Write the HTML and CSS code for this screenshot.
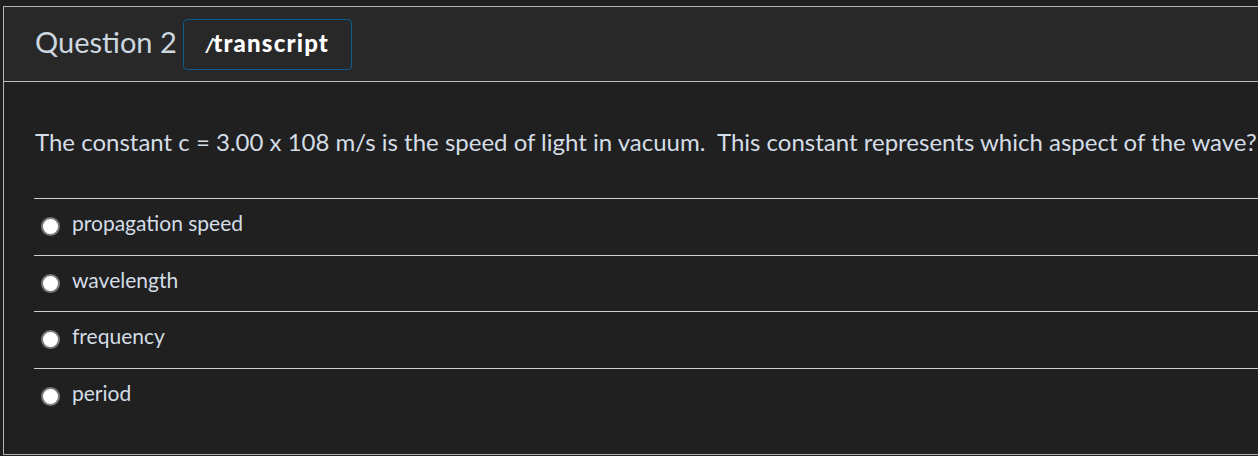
FILE: index.html
```html
<!DOCTYPE html>
<html>
<head>
<meta charset="utf-8">
<link rel="stylesheet" href="styles.css">
</head>
<body>
<div class="panel">
  <div class="header">
    <h2 class="title">Question 2</h2>
    <button class="transcript"><span class="slash">/</span>transcript</button>
  </div>
  <div class="content">
    <p class="question">The constant c = 3.00 x 108 m/s is the speed of light in vacuum.&nbsp; This constant represents which aspect of the wave?</p>
    <ul class="answers">
      <li class="answer"><span class="radio"></span><span class="label">propagation speed</span></li>
      <li class="answer"><span class="radio"></span><span class="label">wavelength</span></li>
      <li class="answer"><span class="radio"></span><span class="label">frequency</span></li>
      <li class="answer"><span class="radio"></span><span class="label">period</span></li>
    </ul>
  </div>
</div>
</body>
</html>
```
FILE: styles.css
```css
html, body {
  margin: 0;
  padding: 0;
  background: #1f1f1f;
  overflow: hidden;
  width: 1258px;
  height: 456px;
}
body {
  padding: 6px 0 0 3px;
  box-sizing: border-box;
  font-family: Lato, "Noto Sans", sans-serif;
}
.panel {
  width: 1300px;
  border: 1px solid #b4b4b4;
  border-right: none;
  background: #202020;
  height: 449px;
  box-sizing: border-box;
}
.header {
  display: flex;
  align-items: center;
  height: 74px;
  padding-left: 31px;
  background: #282828;
  border-bottom: 1px solid #bdbdbd;
  gap: 6px;
}
.title {
  margin: 0;
  font-size: 29px;
  font-weight: 400;
  color: #cdd7e0;
  margin-top: -5px;
}
.transcript {
  width: 169px;
  height: 51px;
  margin-top: 0;
  background: #282828;
  border: 1px solid #0d5a8f;
  border-radius: 4px;
  color: #ffffff;
  font-family: Lato, sans-serif;
  font-weight: 900;
  font-size: 24px;
  letter-spacing: 1.2px;
  padding: 0 0 3px 0;
}
.slash {
  font-style: italic;
  font-size: 19px;
  letter-spacing: -0.5px;
}
.content {
  padding: 0 0 0 30px;
}
.question {
  margin: 0 0 0 1px;
  padding-top: 45px;
  font-size: 24px;
  color: #d4dde6;
  white-space: nowrap;
  line-height: 29px;
  height: 71px;
}
.answers {
  list-style: none;
  margin: 0;
  padding: 0;
}
.answer {
  display: flex;
  align-items: center;
  height: 55.5px;
  border-top: 1px solid #cfcfcf;
  padding-left: 7px;
  gap: 12px;
}
.radio {
  width: 15px;
  height: 15px;
  border-radius: 50%;
  background: #ffffff;
  border: 2px solid #7a7a7a;
  box-sizing: content-box;
}
.label {
  font-size: 21px;
  color: #d4dde6;
  margin-top: -8px;
}
```
